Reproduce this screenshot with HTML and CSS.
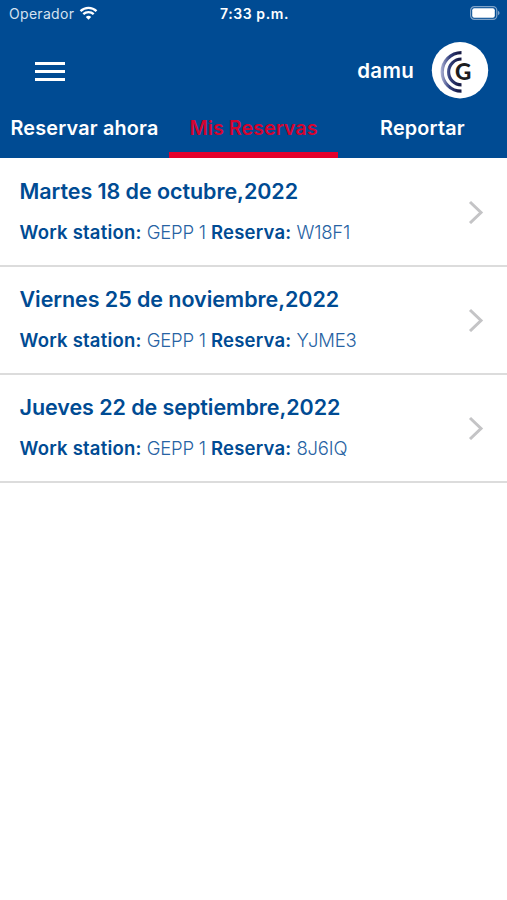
FILE: index.html
```html
<!DOCTYPE html>
<html lang="es">
<head>
  <meta charset="UTF-8">
  <meta name="viewport" content="width=device-width, initial-scale=1.0">
  <title>Mis Reservas</title>
  <link rel="stylesheet" href="styles.css">
</head>
<body>
  <header>
    <div class="status-bar">
      <div class="carrier">
        <span>Operador</span>
        <svg class="wifi" width="19" height="14" viewBox="0 0 18 14">
          <path d="M1 5.2 A11.5 11.5 0 0 1 17 5.2" />
          <path d="M3.8 8.2 A7.5 7.5 0 0 1 14.2 8.2" />
          <path class="wifi-dot" d="M9 13.8 L6.3 10.9 A4.2 4.2 0 0 1 11.7 10.9 Z" />
        </svg>
      </div>
      <div class="time">7:33 p.m.</div>
      <svg class="battery" width="30" height="14" viewBox="0 0 30 14">
        <rect class="battery-case" x="0.6" y="0.6" width="26.2" height="12.8" rx="3.8" />
        <rect class="battery-level" x="2.2" y="2.3" width="22.6" height="9.4" rx="2" />
        <path class="battery-tip" d="M28 4.8 Q29.6 5.6 29.6 7 Q29.6 8.4 28 9.2 Z" />
      </svg>
    </div>

    <div class="top-bar">
      <button class="menu-btn" aria-label="Menú">
        <span></span>
        <span></span>
        <span></span>
      </button>
      <div class="user">
        <span class="user-name">damu</span>
        <svg class="avatar" width="58" height="58" viewBox="0 0 58 58">
          <defs>
            <linearGradient id="arc" gradientUnits="userSpaceOnUse" x1="9" y1="0" x2="28" y2="0">
              <stop offset="0" stop-color="#b9bddd" />
              <stop offset="0.5" stop-color="#34417f" />
              <stop offset="1" stop-color="#161a45" />
            </linearGradient>
          </defs>
          <circle cx="29" cy="29.3" r="28.2" fill="#fff" />
          <path class="arc" d="M30.5 11.6 A19.3 19.3 0 0 0 30.5 50.2" />
          <path class="arc" d="M30.5 18 A12.9 12.9 0 0 0 30.5 43.8" />
          <text class="avatar-letter" x="24" y="39">G</text>
        </svg>
      </div>
    </div>

    <nav class="tabs">
      <a class="tab">Reservar ahora</a>
      <a class="tab active">Mis Reservas</a>
      <a class="tab">Reportar</a>
    </nav>
  </header>

  <main class="reservas">
    <article class="reserva">
      <div class="info">
        <h2>Martes 18 de octubre,2022</h2>
        <p><b>Work station:</b> GEPP 1 <b>Reserva:</b> W18F1</p>
      </div>
      <svg class="chevron" width="16" height="24" viewBox="0 0 16 24"><path d="M2 2 L13 12.5 L2 23" /></svg>
    </article>
    <article class="reserva">
      <div class="info">
        <h2>Viernes 25 de noviembre,2022</h2>
        <p><b>Work station:</b> GEPP 1 <b>Reserva:</b> YJME3</p>
      </div>
      <svg class="chevron" width="16" height="24" viewBox="0 0 16 24"><path d="M2 2 L13 12.5 L2 23" /></svg>
    </article>
    <article class="reserva">
      <div class="info">
        <h2>Jueves 22 de septiembre,2022</h2>
        <p><b>Work station:</b> GEPP 1 <b>Reserva:</b> 8J6IQ</p>
      </div>
      <svg class="chevron" width="16" height="24" viewBox="0 0 16 24"><path d="M2 2 L13 12.5 L2 23" /></svg>
    </article>
  </main>
</body>
</html>
```

FILE: styles.css
```css
* {
  box-sizing: border-box;
}

body {
  margin: 0;
  font-family: Inter, 'Liberation Sans', sans-serif;
  background: #fff;
  color: #004b93;
}

header {
  height: 158px;
  background: #004b93;
  color: #fff;
}

.status-bar {
  display: grid;
  grid-template-columns: 1fr auto 1fr;
  align-items: center;
  height: 28px;
  padding: 0 7px 2px 9px;
  font-size: 14px;
}

.carrier {
  display: flex;
  align-items: center;
  gap: 5px;
  color: #d5e2f0;
  letter-spacing: 0.3px;
}

.wifi {
  fill: none;
  stroke: #fff;
  stroke-width: 2.3;
}

.wifi .wifi-dot {
  fill: #fff;
  stroke: none;
}

.time {
  font-weight: 600;
  letter-spacing: 0.6px;
}

.battery {
  justify-self: end;
}

.battery-case {
  fill: none;
  stroke: #7fa3c8;
  stroke-width: 1.2;
}

.battery-level {
  fill: #fff;
}

.battery-tip {
  fill: #7fa3c8;
}

.top-bar {
  display: flex;
  justify-content: space-between;
  align-items: center;
  height: 84px;
  padding: 0 18px 0 35px;
}

.menu-btn {
  display: flex;
  flex-direction: column;
  gap: 5px;
  width: 30px;
  margin-top: 3px;
  padding: 0;
  background: none;
  border: none;
}

.menu-btn span {
  height: 3px;
  background: #fff;
}

.user {
  display: flex;
  align-items: center;
  gap: 17px;
}

.user-name {
  font-size: 20.5px;
  font-weight: 600;
  letter-spacing: 0.3px;
}

.arc {
  fill: none;
  stroke: url(#arc);
  stroke-width: 3.2;
}

.avatar-letter {
  font-family: Lato, sans-serif;
  font-size: 22.5px;
  font-weight: 900;
  fill: #1d1d1f;
}

.tabs {
  display: grid;
  grid-template-columns: repeat(3, 1fr);
  height: 46px;
}

.tab {
  padding-top: 4px;
  border-bottom: 6px solid transparent;
  font-size: 19.8px;
  font-weight: 600;
  line-height: 24px;
  letter-spacing: 0.2px;
  text-align: center;
  white-space: nowrap;
}

.tab.active {
  color: #d5042f;
  border-color: #e4002b;
  letter-spacing: 0;
}

.reservas {
  padding-top: 1px;
}

.reserva {
  display: flex;
  justify-content: space-between;
  align-items: center;
  height: 108px;
  padding: 0 23px 0 19.5px;
  border-bottom: 2px solid #dcdcdc;
}

.info h2 {
  margin: -2px 0 16px;
  font-size: 21.5px;
  font-weight: 600;
  line-height: 26px;
  letter-spacing: -0.06px;
}

.info p {
  margin: 0;
  color: #2763a3;
  font-size: 18.5px;
  font-weight: 300;
  line-height: 24px;
  letter-spacing: -0.2px;
}

.info b {
  color: #004b93;
  font-weight: 600;
  letter-spacing: 0.22px;
}

.chevron {
  fill: none;
  stroke: #c4c4c6;
  stroke-width: 3;
}
```
